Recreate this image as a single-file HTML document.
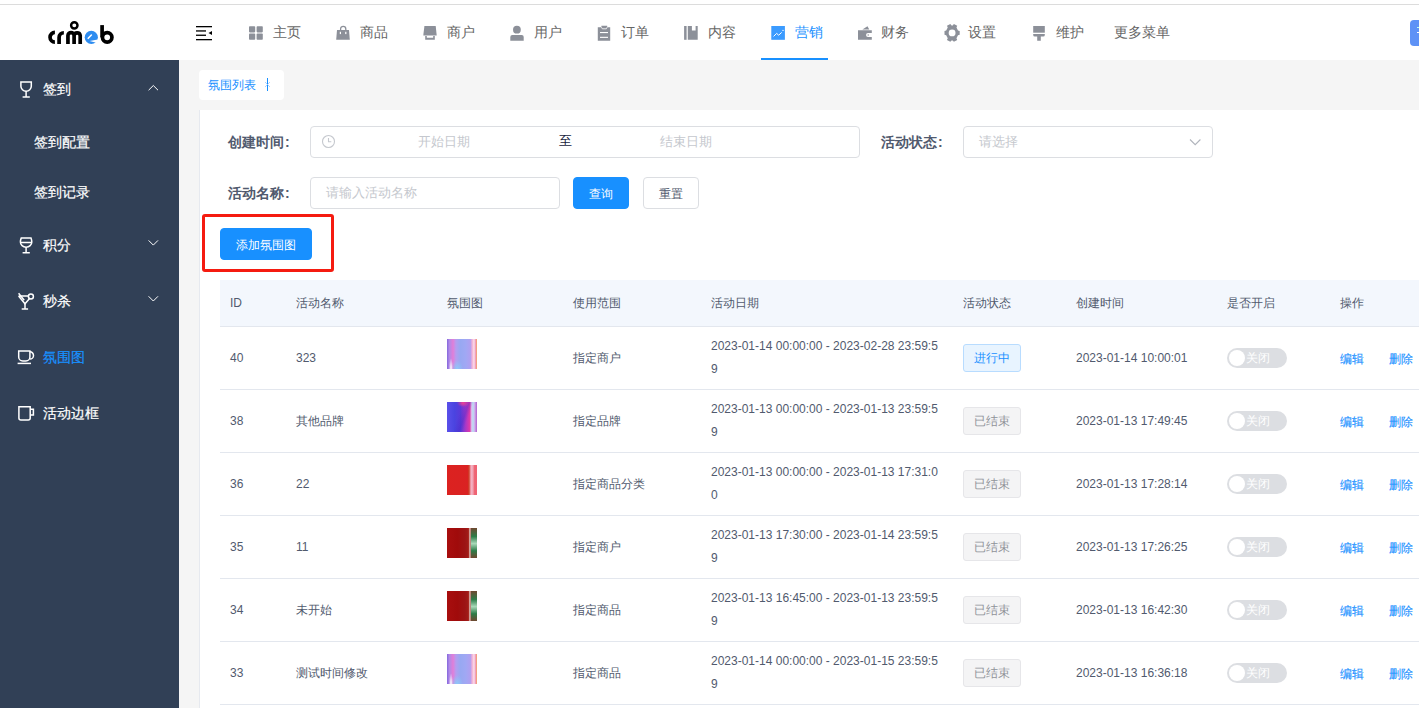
<!DOCTYPE html>
<html><head><meta charset="utf-8">
<style>
*{box-sizing:border-box;margin:0;padding:0}
html,body{width:1419px;height:708px;overflow:hidden}
body{position:relative;background:#f5f5f5;font-family:"Liberation Sans",sans-serif;font-size:12px;color:#515a6e}
.abs{position:absolute}
#topline{left:0;top:0;width:1419px;height:5px;background:#fff;border-bottom:1px solid #dcdcdc}
#header{left:0;top:5px;width:1419px;height:55px;background:#fff}
#sidebar{left:0;top:60px;width:179px;height:648px;background:#314056}
.nav{top:22px;height:20px;font-size:14px;color:#666;line-height:20px;white-space:nowrap}
.side{left:0;width:179px;height:20px;color:#fff;font-size:14px;-webkit-text-stroke:0.2px currentColor;line-height:20px;white-space:nowrap}
.side .t{position:absolute;left:43px;top:0}
#card{left:199px;top:110px;width:1220px;height:598px;background:#fff;border-left:1px solid #e6e9ef}

.lbl{position:absolute;font-size:14px;font-weight:bold;color:#515a6e;line-height:20px;white-space:nowrap}
.inp{position:absolute;height:32px;border:1px solid #dcdee2;border-radius:4px;background:#fff}
.ph{position:absolute;font-size:13px;color:#c5c8ce;line-height:20px;white-space:nowrap}
.btn{position:absolute;height:32px;border-radius:4px;font-size:12px;line-height:32px;text-align:center;white-space:nowrap}

#thead{left:220px;top:280px;width:1199px;height:47px;background:#f3f7fd;border-bottom:1px solid #e3e7ee}
.th,.td{position:absolute;font-size:12px;line-height:20px;color:#515a6e;white-space:nowrap}
.th{top:292.5px}
.row{position:absolute;left:220px;width:1199px;height:63px;border-bottom:1px solid #e3e7ee}
.row .td{top:21px}
.row .d1{top:9px}
.row .d2{top:32px}
.thumb{position:absolute;left:227px;top:12px;width:30px;height:30px}
.tag{position:absolute;left:743px;top:17px;width:58px;height:28px;border-radius:3px;font-size:12px;line-height:26px;text-align:center}
.tag.on{background:#e8f4ff;border:1px solid #b8dcff;color:#1890ff}
.tag.off{background:#f4f4f5;border:1px solid #e6e6e9;color:#909399}
.sw{position:absolute;left:1007px;top:21px;width:60px;height:20px;border-radius:10px;background:#dcdee2}
.sw i{position:absolute;left:2px;top:2px;width:16px;height:16px;border-radius:50%;background:#fff}
.sw b{position:absolute;left:19px;top:0;font-weight:normal;font-size:12px;line-height:20px;color:#fff}
.op{position:absolute;top:21.5px;-webkit-text-stroke:0.12px currentColor;font-size:12px;line-height:20px;color:#1890ff}

.g1{background:radial-gradient(ellipse 2px 10px at 4px 29px,#fff 0%,rgba(255,255,255,0) 100%),radial-gradient(ellipse 6px 9px at 10px 30px,#8cc8f8 0%,rgba(140,200,248,0) 100%),linear-gradient(90deg,#8468dc 0%,#b08ae8 8%,#e27ed8 20%,#b49ef0 30%,#98a8f2 45%,#a0a8f4 62%,#b0a0f0 78%,#f2b0d6 84%,#fae0ea 90%,#f0a0c0 95%,#f3a060 100%)}
.g2{background:radial-gradient(ellipse 6px 4px at 16px 1px,#f04090 0%,rgba(240,64,144,0) 100%),linear-gradient(110deg,rgba(0,0,0,0) 40%,rgba(60,40,200,0.35) 55%,rgba(0,0,0,0) 65%),linear-gradient(90deg,#5a50ea 0%,#4a44e0 25%,#5a3ad8 45%,#a838c8 62%,#e03aa8 76%,#d8c0ec 82%,#b8e0f4 87%,#d0b0ec 92%,#b060d0 100%)}
.g3{background:linear-gradient(90deg,#dc2220 0%,#da2222 70%,#c84a28 73%,#e26060 76%,#f4b4c8 80%,#f2a4b4 86%,#ee6474 92%,#f06272 100%)}
.g4{background:linear-gradient(180deg,#6e4830 0%,#2c7c48 28%,#a8d8b8 52%,#2c7c48 76%,#6e4830 100%) 24px 0/6px 30px no-repeat,linear-gradient(90deg,#a80e0e 0%,#a00b0b 35%,#9c1414 60%,#a01c18 70%,#b03028 73%,#d8b8b0 75.5%,#c89890 78%,#8a2a1c 80%)}
</style></head>
<body>
<div id="topline" class="abs"></div>
<div id="header" class="abs"></div>

<!-- logo -->
<svg class="abs" style="left:0;top:0" width="130" height="60" viewBox="0 0 130 60">
  <g fill="none" stroke="#000" stroke-width="3.7">
    <path d="M54.9,32.45 A4.85,4.85 0 0 0 54.9,42.15"/>
    <path d="M59.1,43.9 V37.5 A4.75,4.75 0 0 1 63.85,32.75"/>
    <path d="M67.95,43.9 V35.5 A3.08,3.08 0 0 1 74.1,35.5 V43.9 M74.1,35.5 A3.08,3.08 0 0 1 80.2,35.5 V43.9"/>
    <path d="M102.1,25.1 V37.3"/>
    <circle cx="107.2" cy="37.3" r="4.75"/>
    <circle cx="74.3" cy="25.35" r="3.2" stroke-width="2.45"/>
  </g>
  <circle cx="91.3" cy="37.3" r="6.6" fill="#2d8cf0"/>
  <path d="M88.2,38.3 L91.4,35" stroke="#fff" stroke-width="1.6" stroke-linecap="round"/>
  <path d="M89.6,40.9 L99,39.2 L99,43 L95.4,42.4Z" fill="#fff"/>
</svg>

<!-- menu toggle -->
<svg class="abs" style="left:196px;top:25px" width="17" height="16" viewBox="0 0 17 16">
  <rect x="0" y="1" width="16" height="1.3" fill="#000"/>
  <rect x="0" y="5.3" width="10" height="1.3" fill="#000"/>
  <rect x="0" y="9.6" width="10" height="1.3" fill="#000"/>
  <rect x="0" y="14" width="16" height="1.3" fill="#000"/>
  <path d="M16,6 L12.5,8 L16,10Z" fill="#000"/>
</svg>


<!-- top nav -->
<div class="abs" style="left:0;top:0">
<svg class="abs" style="left:0;top:0" width="1100" height="60" viewBox="0 0 1100 60" fill="#8c9099">
  <!-- home grid -->
  <rect x="249" y="26.2" width="6.2" height="6.2" rx="0.8"/><rect x="256.6" y="26.2" width="6.2" height="6.2" rx="0.8"/>
  <rect x="249" y="33.6" width="6.2" height="6.2" rx="0.8"/><rect x="256.6" y="33.6" width="6.2" height="6.2" rx="0.8"/>
  <!-- bag -->
  <path d="M340.6,29.9 V28.9 A2.6,2.6 0 0 1 345.8,28.9 V29.9" fill="none" stroke="#8c9099" stroke-width="1.3"/>
  <path d="M337,29.9 H349 L349.8,39.8 H336.2Z"/>
  <rect x="339.8" y="31.8" width="1.2" height="2.3" fill="#fff"/><rect x="345.2" y="31.8" width="1.2" height="2.3" fill="#fff"/>
  <!-- shop -->
  <path d="M424.4,26 H435.7 L436.7,35.5 H423.3Z"/>
  <path d="M425.2,35.9 H434.8 V39.8 H425.2Z M426.8,35.9 V37.8 H433.2 V35.9Z" fill-rule="evenodd"/>
  <!-- user -->
  <circle cx="516.9" cy="29.7" r="3.9"/>
  <path d="M510.3,37 Q510.3,35 512.3,35 H521.7 Q523.7,35 523.7,37 V40.8 H510.3Z"/>
  <!-- clipboard -->
  <path d="M597.8,27.2 H601.4 V25.8 H607.2 V27.2 H610.2 V40.8 H597.8Z"/>
  <path d="M601.4,27.2 L602.3,28.8 H606.3 L607.2,27.2" fill="none" stroke="#fff" stroke-width="0.8"/>
  <rect x="600" y="32" width="8" height="1.1" fill="#fff"/><rect x="600" y="36.8" width="8" height="1.1" fill="#fff"/>
  <!-- content -->
  <rect x="684.1" y="26" width="2.5" height="13.8"/>
  <path d="M687.8,26 H691.9 V30.6 H695.6 V26 H697.7 V39.8 H687.8Z"/>
  <!-- marketing (blue) -->
  <rect x="771.3" y="26" width="13.6" height="13.8" fill="#3b9bff"/>
  <polyline points="773.6,36.4 776.6,33.4 778.7,35.2 781.7,32.4" fill="none" stroke="#fff" stroke-width="1"/>
  <circle cx="783" cy="30.4" r="0.7" fill="#fff"/>
  <!-- wallet -->
  <path d="M862.4,29.5 L867.5,26.2 L869.3,29.5Z"/>
  <path d="M858,30.3 H871.8 V33.1 H868 A1.95,1.95 0 0 0 868,37 H871.8 V39.8 H858Z"/>
  <circle cx="868.2" cy="35" r="0.7"/>
  <!-- gear -->
  <g transform="translate(952.1,32.9)">
    <path d="M-2,-8 H2 L2.6,-6.2 L5.6,-4.6 L7.4,-5.4 L9.4,-1.9 L7.9,-0.6 V0.6 L9.4,1.9 L7.4,5.4 L5.6,4.6 L2.6,6.2 L2,8 H-2 L-2.6,6.2 L-5.6,4.6 L-7.4,5.4 L-9.4,1.9 L-7.9,0.6 V-0.6 L-9.4,-1.9 L-7.4,-5.4 L-5.6,-4.6 L-2.6,-6.2Z M3.6,0 A3.6,3.6 0 1 0 -3.6,0 A3.6,3.6 0 1 0 3.6,0Z" fill-rule="evenodd" transform="rotate(90) scale(0.95)"/>
  </g>
  <!-- brush -->
  <rect x="1033.2" y="26" width="11.6" height="6.7"/>
  <path d="M1033.2,34 H1044.8 V35 Q1044.8,36.6 1043.2,36.6 H1040.8 V40.8 H1037.2 V36.6 H1034.8 Q1033.2,36.6 1033.2,35Z"/>
</svg>
<div class="nav abs" style="left:273px">主页</div>
<div class="nav abs" style="left:360px">商品</div>
<div class="nav abs" style="left:447px">商户</div>
<div class="nav abs" style="left:534px">用户</div>
<div class="nav abs" style="left:621px">订单</div>
<div class="nav abs" style="left:708px">内容</div>
<div class="nav abs" style="left:795px;color:#1890ff">营销</div>
<div class="abs" style="left:761px;top:58px;width:67px;height:2px;background:#1890ff"></div>
<div class="nav abs" style="left:881px">财务</div>
<div class="nav abs" style="left:968px">设置</div>
<div class="nav abs" style="left:1056px">维护</div>
<div class="nav abs" style="left:1114px">更多菜单</div>
<div class="abs" style="left:1410px;top:20px;width:20px;height:26px;border-radius:4px;background:#5e92f6"></div>
<div class="abs" style="left:1417px;top:27px;width:2px;height:1px;background:#bfe"></div>
<div class="abs" style="left:1417px;top:32px;width:2px;height:1px;background:#fff"></div>
</div>
<div id="sidebar" class="abs">
<svg class="abs" style="left:0;top:0" width="179" height="400" viewBox="0 60 179 400" fill="none" stroke="#fff" stroke-width="1.5">
  <!-- glass 1 -->
  <path d="M20.9,81.9 H31.3 V86.2 A5.2,5 0 0 1 20.9,86.2Z"/>
  <path d="M26.1,91.2 V96.9 M22.6,97 H29.8"/>
  <path d="M148.6,90.2 L153.3,85.5 L158,90.2" stroke-width="1"/>
  <!-- glass 2 -->
  <path d="M21.3,237.9 H31 Q31.8,240 31.8,242 A5.7,5.2 0 0 1 20.4,242 Q20.4,240 21.3,237.9Z"/>
  <path d="M20.6,242.4 H31.6 M26.1,247.2 V252.6 M22.6,252.8 H29.8"/>
  <path d="M148.6,240.4 L153.3,245.1 L158,240.4" stroke-width="1"/>
  <!-- cocktail -->
  <path d="M18.6,296 H28.4 M30,298 L25,303.8 L18.6,296"/>
  <path d="M18.6,293.2 L24.2,300.2 M25,304 V308.6 M21.7,309 H28.1"/>
  <circle cx="30.9" cy="296.6" r="2.5"/>
  <path d="M148.6,296.3 L153.3,301 L158,296.3" stroke-width="1"/>
  <!-- cup -->
  <path d="M18.7,351 H29.9 V357 A4,4 0 0 1 25.9,361 H22.7 A4,4 0 0 1 18.7,357Z"/>
  <path d="M30,351.8 A3.5,3.6 0 0 1 30,359"/>
  <path d="M17.6,363.4 H31"/>
  <!-- mug -->
  <path d="M18.9,406.8 H30.2 V418 A2,2 0 0 1 28.2,420 H20.9 A2,2 0 0 1 18.9,418Z"/>
  <path d="M30.2,409.2 H33.4 V415 H30.2"/>
</svg>
<div class="side abs" style="top:19px"><span class="t">签到</span></div>
<div class="side abs" style="top:72px"><span class="t" style="left:34px">签到配置</span></div>
<div class="side abs" style="top:122px"><span class="t" style="left:34px">签到记录</span></div>
<div class="side abs" style="top:175px"><span class="t">积分</span></div>
<div class="side abs" style="top:231px"><span class="t">秒杀</span></div>
<div class="side abs" style="top:287px"><span class="t" style="color:#1890ff">氛围图</span></div>
<div class="side abs" style="top:343px"><span class="t">活动边框</span></div>
</div>
<div id="card" class="abs"></div>
<!-- tab -->
<div class="abs" style="left:199px;top:70px;width:85px;height:30px;background:#fff;border-radius:4px"></div>
<div class="abs" style="left:208px;top:75px;font-size:12px;line-height:20px;color:#1890ff;white-space:nowrap">氛围列表</div>
<div class="abs" style="left:267px;top:78px;width:1px;height:13px;background:#1890ff"></div>
<svg class="abs" style="left:264px;top:81px" width="7" height="7" viewBox="0 0 7 7"><path d="M1,1 L6,6 M6,1 L1,6" stroke="#9cc9ff" stroke-width="0.8"/></svg>

<!-- form row 1 -->
<div class="lbl" style="left:228px;top:132px">创建时间<span style="margin-left:1px">:</span></div>
<div class="inp" style="left:310px;top:126px;width:550px"></div>
<svg class="abs" style="left:321px;top:134px" width="15" height="15" viewBox="0 0 15 15"><circle cx="7.5" cy="7.5" r="6" fill="none" stroke="#c5c8ce" stroke-width="1.1"/><path d="M7.5,4 V7.8 H10.3" fill="none" stroke="#c5c8ce" stroke-width="1.1"/></svg>
<div class="ph" style="left:418px;top:132px">开始日期</div>
<div class="abs" style="left:559px;top:131px;font-size:13px;line-height:20px;color:#17233d">至</div>
<div class="ph" style="left:660px;top:132px">结束日期</div>
<div class="lbl" style="left:881px;top:132px">活动状态<span style="margin-left:1px">:</span></div>
<div class="inp" style="left:963px;top:126px;width:250px"></div>
<div class="ph" style="left:979px;top:132px">请选择</div>
<svg class="abs" style="left:1189px;top:138px" width="13" height="9" viewBox="0 0 13 9"><path d="M1,1.5 L6.2,6.7 L11.4,1.5" fill="none" stroke="#b0b4bc" stroke-width="1.1"/></svg>

<!-- form row 2 -->
<div class="lbl" style="left:228px;top:183px">活动名称<span style="margin-left:1px">:</span></div>
<div class="inp" style="left:310px;top:177px;width:250px"></div>
<div class="ph" style="left:326px;top:183px">请输入活动名称</div>
<div class="btn" style="left:573px;top:177px;width:56px;background:#1890ff;color:#fff;border:1px solid #1890ff">查询</div>
<div class="btn" style="left:643px;top:177px;width:56px;background:#fff;color:#515a6e;border:1px solid #dcdee2">重置</div>

<!-- add button + red box -->
<div class="abs" style="left:202px;top:214px;width:132px;height:58px;border:3px solid #f51b10;border-radius:3px"></div>
<div class="btn" style="left:220px;top:228px;width:92px;background:#1890ff;color:#fff;border:1px solid #1890ff">添加氛围图</div>


<!-- table -->
<div id="thead" class="abs"></div>
<div class="th" style="left:230px">ID</div>
<div class="th" style="left:296px">活动名称</div>
<div class="th" style="left:447px">氛围图</div>
<div class="th" style="left:573px">使用范围</div>
<div class="th" style="left:711px">活动日期</div>
<div class="th" style="left:963px">活动状态</div>
<div class="th" style="left:1076px">创建时间</div>
<div class="th" style="left:1227px">是否开启</div>
<div class="th" style="left:1340px">操作</div>
<div class="row" style="top:327px">
<div class="td" style="left:10px">40</div>
<div class="td" style="left:76px">323</div>
<div class="thumb g1"></div>
<div class="td" style="left:353px">指定商户</div>
<div class="td d1" style="left:491px">2023-01-14 00:00:00 - 2023-02-28 23:59:5</div>
<div class="td d2" style="left:491px">9</div>
<div class="tag on">进行中</div>
<div class="td" style="left:856px">2023-01-14 10:00:01</div>
<div class="sw"><i></i><b>关闭</b></div>
<div class="op" style="left:1120px">编辑</div>
<div class="op" style="left:1169px">删除</div>
</div>
<div class="row" style="top:390px">
<div class="td" style="left:10px">38</div>
<div class="td" style="left:76px">其他品牌</div>
<div class="thumb g2"></div>
<div class="td" style="left:353px">指定品牌</div>
<div class="td d1" style="left:491px">2023-01-13 00:00:00 - 2023-01-13 23:59:5</div>
<div class="td d2" style="left:491px">9</div>
<div class="tag off">已结束</div>
<div class="td" style="left:856px">2023-01-13 17:49:45</div>
<div class="sw"><i></i><b>关闭</b></div>
<div class="op" style="left:1120px">编辑</div>
<div class="op" style="left:1169px">删除</div>
</div>
<div class="row" style="top:453px">
<div class="td" style="left:10px">36</div>
<div class="td" style="left:76px">22</div>
<div class="thumb g3"></div>
<div class="td" style="left:353px">指定商品分类</div>
<div class="td d1" style="left:491px">2023-01-13 00:00:00 - 2023-01-13 17:31:0</div>
<div class="td d2" style="left:491px">0</div>
<div class="tag off">已结束</div>
<div class="td" style="left:856px">2023-01-13 17:28:14</div>
<div class="sw"><i></i><b>关闭</b></div>
<div class="op" style="left:1120px">编辑</div>
<div class="op" style="left:1169px">删除</div>
</div>
<div class="row" style="top:516px">
<div class="td" style="left:10px">35</div>
<div class="td" style="left:76px">11</div>
<div class="thumb g4"></div>
<div class="td" style="left:353px">指定商户</div>
<div class="td d1" style="left:491px">2023-01-13 17:30:00 - 2023-01-14 23:59:5</div>
<div class="td d2" style="left:491px">9</div>
<div class="tag off">已结束</div>
<div class="td" style="left:856px">2023-01-13 17:26:25</div>
<div class="sw"><i></i><b>关闭</b></div>
<div class="op" style="left:1120px">编辑</div>
<div class="op" style="left:1169px">删除</div>
</div>
<div class="row" style="top:579px">
<div class="td" style="left:10px">34</div>
<div class="td" style="left:76px">未开始</div>
<div class="thumb g4"></div>
<div class="td" style="left:353px">指定商品</div>
<div class="td d1" style="left:491px">2023-01-13 16:45:00 - 2023-01-13 23:59:5</div>
<div class="td d2" style="left:491px">9</div>
<div class="tag off">已结束</div>
<div class="td" style="left:856px">2023-01-13 16:42:30</div>
<div class="sw"><i></i><b>关闭</b></div>
<div class="op" style="left:1120px">编辑</div>
<div class="op" style="left:1169px">删除</div>
</div>
<div class="row" style="top:642px">
<div class="td" style="left:10px">33</div>
<div class="td" style="left:76px">测试时间修改</div>
<div class="thumb g1"></div>
<div class="td" style="left:353px">指定商品</div>
<div class="td d1" style="left:491px">2023-01-14 00:00:00 - 2023-01-15 23:59:5</div>
<div class="td d2" style="left:491px">9</div>
<div class="tag off">已结束</div>
<div class="td" style="left:856px">2023-01-13 16:36:18</div>
<div class="sw"><i></i><b>关闭</b></div>
<div class="op" style="left:1120px">编辑</div>
<div class="op" style="left:1169px">删除</div>
</div>
</body></html>
